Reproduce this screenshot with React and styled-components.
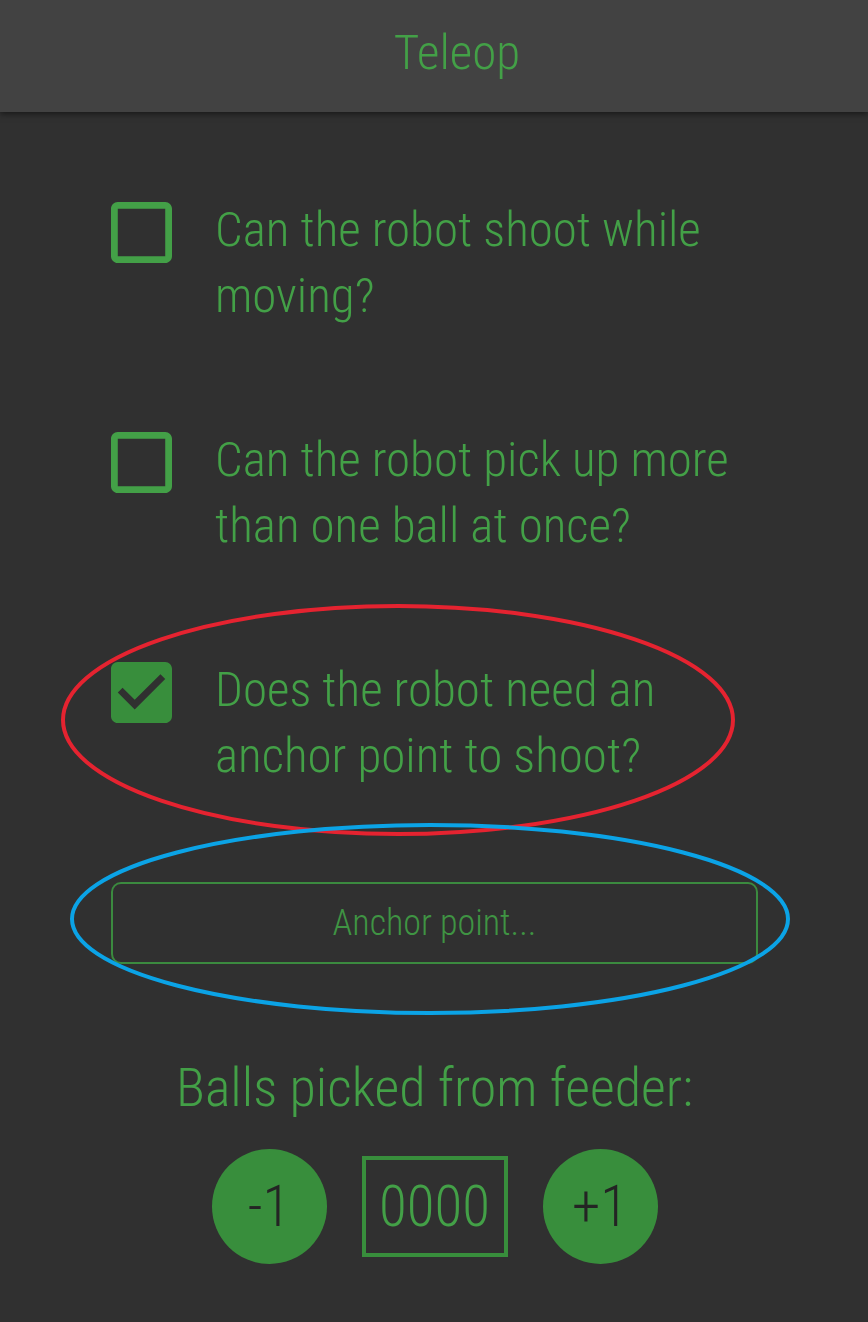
import React from 'react';
import styled, { createGlobalStyle } from 'styled-components';

const GREEN = '#43a047';
const GREEN_DARK = '#388e3c';

const GlobalStyle = createGlobalStyle`
  body {
    margin: 0;
    background: #303030;
    font-family: Roboto, "Liberation Sans", sans-serif;
    font-stretch: condensed;
    font-weight: 300;
  }
`;

const Page = styled.div`
  position: relative;
  min-height: 1322px;
  background: #303030;
  color: ${GREEN};
`;

const Header = styled.header`
  height: 112px;
  box-sizing: border-box;
  padding: 0 0 8px 46px;
  display: flex;
  align-items: center;
  justify-content: center;
  background: #424242;
  box-shadow: 0 2px 6px rgba(0, 0, 0, 0.5);
  font-size: 49px;
`;

const Content = styled.main`
  display: flex;
  flex-direction: column;
  padding: 85px 110px 0 111px;
`;

const Row = styled.label`
  display: flex;
  align-items: flex-start;
  gap: 43px;
  margin-bottom: 98px;
`;

const Box = styled.svg`
  flex: none;
  width: 61px;
  height: 61px;
  margin-top: 5px;
  fill: ${p => (p.$checked ? GREEN_DARK : GREEN)};
`;

const Question = styled.span`
  width: 520px;
  font-size: 49px;
  line-height: 66px;
`;

const AnchorInput = styled.input`
  box-sizing: border-box;
  width: 100%;
  height: 82px;
  margin-top: -5px;
  border: 2px solid #3b8a3f;
  border-radius: 10px;
  background: transparent;
  color: ${GREEN};
  font: inherit;
  font-size: 36px;
  text-align: center;
  outline: none;
  &::placeholder {
    color: #3f9443;
  }
`;

const CounterLabel = styled.div`
  margin-top: 91px;
  text-align: center;
  font-size: 54px;
  line-height: 66px;
`;

const Counter = styled.div`
  display: flex;
  justify-content: center;
  align-items: center;
  gap: 35px;
  margin-top: 28px;
`;

const RoundButton = styled.button`
  width: 115px;
  height: 115px;
  border: none;
  border-radius: 50%;
  background: ${GREEN_DARK};
  color: #242424;
  font: inherit;
  font-size: 57px;
  padding: 0;
`;

const Count = styled.div`
  box-sizing: border-box;
  width: 146px;
  height: 101px;
  display: flex;
  align-items: center;
  justify-content: center;
  border: 4px solid ${GREEN_DARK};
  font-size: 57px;
  color: ${GREEN};
`;

const Marks = styled.svg`
  position: absolute;
  left: 0;
  top: 0;
  width: 868px;
  height: 1322px;
  pointer-events: none;
`;

const Checkbox = ({ checked }) => (
  <Box viewBox="3 3 18 18" $checked={checked}>
    {checked ? (
      <path d="M19 3H5c-1.11 0-2 .9-2 2v14c0 1.1.89 2 2 2h14c1.11 0 2-.9 2-2V5c0-1.1-.89-2-2-2zm-9 14l-5-5 1.41-1.41L10 14.17l7.59-7.59L19 8l-9 9z" />
    ) : (
      <path d="M19 5v14H5V5h14m0-2H5c-1.1 0-2 .9-2 2v14c0 1.1.9 2 2 2h14c1.1 0 2-.9 2-2V5c0-1.1-.9-2-2-2z" />
    )}
  </Box>
);

const questions = [
  { text: 'Can the robot shoot while moving?', checked: false },
  { text: 'Can the robot pick up more than one ball at once?', checked: false },
  { text: 'Does the robot need an anchor point to shoot?', checked: true },
];

export default function App() {
  const [balls, setBalls] = React.useState(0);

  return (
    <Page>
      <GlobalStyle />
      <Header>Teleop</Header>
      <Content>
        {questions.map(q => (
          <Row key={q.text}>
            <Checkbox checked={q.checked} />
            <Question>{q.text}</Question>
          </Row>
        ))}
        <AnchorInput placeholder="Anchor point..." />
        <CounterLabel>Balls picked from feeder:</CounterLabel>
        <Counter>
          <RoundButton onClick={() => setBalls(Math.max(0, balls - 1))}>-1</RoundButton>
          <Count>{String(balls).padStart(4, '0')}</Count>
          <RoundButton onClick={() => setBalls(balls + 1)}>+1</RoundButton>
        </Counter>
      </Content>
      <Marks>
        <ellipse cx="398" cy="720" rx="335" ry="114" fill="none" stroke="#e52330" strokeWidth="4" />
        <ellipse cx="430" cy="919" rx="358" ry="94" fill="none" stroke="#0ba3e6" strokeWidth="4" />
      </Marks>
    </Page>
  );
}
